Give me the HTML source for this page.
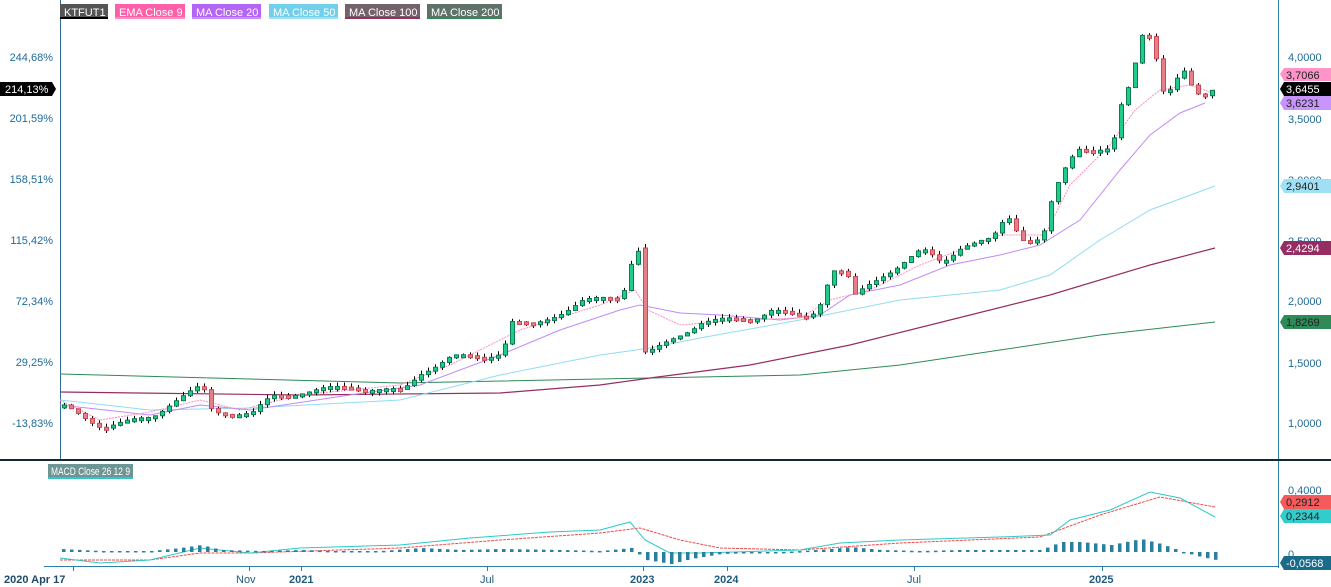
<!DOCTYPE html>
<html><head><meta charset="utf-8"><style>
html,body{margin:0;padding:0;background:#fff;width:1331px;height:587px;overflow:hidden;font-family:"Liberation Sans",sans-serif}
svg{display:block}
text{font-family:"Liberation Sans",sans-serif;font-size:11px}
</style></head><body>
<svg id="s" width="1331" height="587" xmlns="http://www.w3.org/2000/svg">
<rect width="1331" height="587" fill="#fff"/>
<line x1="60.5" y1="0" x2="60.5" y2="459" stroke="#2f6f95" stroke-width="1"/>
<line x1="1278.5" y1="0" x2="1278.5" y2="568" stroke="#2f7fa5" stroke-width="1"/>
<line x1="0" y1="460" x2="1331" y2="460" stroke="#0d2a3a" stroke-width="2"/>
<line x1="44" y1="566.5" x2="1279" y2="566.5" stroke="#2f7fa5" stroke-width="1"/>
<g id="lines"></g>
<g id="candles"></g>
<g id="macd"></g>
<g>
<rect x="60" y="4" width="48" height="14" fill="#555"/><rect x="60" y="17" width="48" height="2" fill="#000"/><text x="64" y="16" fill="#fff" font-size="12">KTFUT1</text>
<rect x="115" y="4" width="70" height="14" fill="#ff5fa8"/><rect x="115" y="17" width="70" height="2" fill="#ff90c4"/><text x="119" y="16" fill="#fff" font-size="12">EMA Close 9</text>
<rect x="192" y="4" width="69" height="14" fill="#b565f5"/><rect x="192" y="17" width="69" height="2" fill="#c98ff8"/><text x="196" y="16" fill="#fff" font-size="12">MA Close 20</text>
<rect x="269" y="4" width="69" height="14" fill="#72cfec"/><rect x="269" y="17" width="69" height="2" fill="#9fe0f4"/><text x="273" y="16" fill="#fff" font-size="12">MA Close 50</text>
<rect x="345" y="4" width="75" height="14" fill="#73616b"/><rect x="345" y="17" width="75" height="2" fill="#9c2d5f"/><text x="349" y="16" fill="#fff" font-size="12">MA Close 100</text>
<rect x="427" y="4" width="75" height="14" fill="#5e7268"/><rect x="427" y="17" width="75" height="2" fill="#2e8b57"/><text x="431" y="16" fill="#fff" font-size="12">MA Close 200</text>
<rect x="48" y="464" width="85" height="13" fill="#6e9595"/><rect x="48" y="477" width="85" height="2" fill="#2ec8c8"/><text x="51" y="475" fill="#fff" font-size="12" textLength="79" lengthAdjust="spacingAndGlyphs">MACD Close 26 12 9</text>
</g>
<g fill="#1f6a9a" text-anchor="end">
<text x="53" y="61">244,68%</text><text x="53" y="122">201,59%</text><text x="53" y="183">158,51%</text>
<text x="53" y="244">115,42%</text><text x="53" y="305">72,34%</text><text x="53" y="366">29,25%</text><text x="53" y="427">-13,83%</text>
</g>
<path d="M0,82 H52 L56,89 L52,96 H0 Z" fill="#000"/><text x="5" y="93" fill="#fff">214,13%</text>
<g fill="#1f6a9a">
<text x="1288" y="61">4,0000</text><text x="1288" y="123">3,5000</text><text x="1288" y="184">3,0000</text>
<text x="1288" y="245">2,5000</text><text x="1288" y="305">2,0000</text><text x="1288" y="367">1,5000</text><text x="1288" y="427">1,0000</text>
<text x="1288" y="494">0,4000</text><text x="1288" y="558">0</text>
</g>
<g>
<path d="M1280,74 L1284,68 H1331 V81 H1284 Z" fill="#ff94c8"/><text x="1286" y="79" fill="#222">3,7066</text>
<path d="M1280,89 L1284,82 H1331 V96 H1284 Z" fill="#000"/><text x="1286" y="93" fill="#fff">3,6455</text>
<path d="M1280,103 L1284,96 H1331 V110 H1284 Z" fill="#c795fb"/><text x="1286" y="107" fill="#222">3,6231</text>
<path d="M1280,186 L1284,179 H1331 V193 H1284 Z" fill="#9fe0f4"/><text x="1286" y="190" fill="#222">2,9401</text>
<path d="M1280,248 L1284,241 H1331 V255 H1284 Z" fill="#962d62"/><text x="1286" y="252" fill="#fff">2,4294</text>
<path d="M1280,322 L1284,315 H1331 V329 H1284 Z" fill="#2e8b57"/><text x="1286" y="326" fill="#222">1,8269</text>
<path d="M1280,502 L1284,495 H1331 V509 H1284 Z" fill="#f65a5a"/><text x="1286" y="506" fill="#222">0,2912</text>
<path d="M1280,516 L1284,509 H1331 V523 H1284 Z" fill="#33cccc"/><text x="1286" y="520" fill="#222">0,2344</text>
<path d="M1280,563 L1284,556 H1331 V570 H1284 Z" fill="#1a6a8a"/><text x="1286" y="567" fill="#fff">-0,0568</text>
</g>
<g stroke="#2f7fa5"><line x1="73.5" y1="567" x2="73.5" y2="571"/><line x1="249.5" y1="567" x2="249.5" y2="571"/><line x1="301.5" y1="567" x2="301.5" y2="571"/><line x1="487.5" y1="567" x2="487.5" y2="571"/><line x1="643.5" y1="567" x2="643.5" y2="571"/><line x1="727.5" y1="567" x2="727.5" y2="571"/><line x1="914.5" y1="567" x2="914.5" y2="571"/><line x1="1102.5" y1="567" x2="1102.5" y2="571"/></g>
<g fill="#1f5a80" font-weight="bold">
<text x="4" y="583" fill="#1d4a6a">2020 Apr 17</text>
<text x="236" y="583" font-weight="normal">Nov</text><text x="289" y="583">2021</text>
<text x="480" y="583" font-weight="normal">Jul</text><text x="630" y="583">2023</text>
<text x="714" y="583">2024</text><text x="907" y="583" font-weight="normal">Jul</text><text x="1089" y="583">2025</text>
</g>
</svg>
<script>
(function(){
var NS="http://www.w3.org/2000/svg";
function interp(pts,x){for(var i=0;i<pts.length-1;i++){if(x>=pts[i][0]&&x<=pts[i+1][0]){var t=(x-pts[i][0])/(pts[i+1][0]-pts[i][0]);return pts[i][1]+t*(pts[i+1][1]-pts[i][1]);}}return pts[pts.length-1][1];}
function el(n,a,p){var e=document.createElementNS(NS,n);for(var k in a){e.setAttribute(k,String(a[k]));}p.appendChild(e);return e;}
function pl(pts,c,w,d,p){var a={points:pts.map(function(q){return q[0]+","+q[1];}).join(" "),fill:"none",stroke:c,"stroke-width":w};if(d){a["stroke-dasharray"]=d;}el("polyline",a,p);}
var Lg=document.getElementById("lines");
pl([[60,374],[400,383],[650,378],[800,375],[900,365],[1000,350],[1100,335],[1215,322]],"#2e8b57",1,null,Lg);
pl([[60,392],[300,395],[500,393],[600,385],[650,378],[750,365],[850,345],[950,320],[1050,295],[1150,265],[1215,248]],"#962d62",1.2,null,Lg);
pl([[60,400],[150,410],[250,408],[400,400],[500,375],[600,355],[650,348],[700,338],[800,320],[900,300],[1000,290],[1050,275],[1100,240],[1150,210],[1215,186]],"#8fdcf2",1,null,Lg);
pl([[60,405],[150,415],[200,405],[250,410],[350,395],[420,385],[500,355],[560,330],[620,310],[640,305],[680,313],[720,315],[780,320],[820,315],[850,295],[900,285],[950,265],[1000,255],[1040,245],[1080,220],[1120,170],[1150,135],[1180,113],[1205,103]],"#c08af8",1,null,Lg);
pl([[60,400],[100,420],[150,412],[200,400],[240,410],[300,395],[400,385],[450,365],[520,330],[600,305],[635,290],[648,310],[680,325],[740,320],[800,318],[830,300],[870,290],[920,265],[1000,235],[1045,235],[1070,185],[1110,145],[1135,110],[1160,90],[1190,85],[1210,92],[1215,90]],"#ff8cc0",1,"2,1",Lg);
var C=[[60,405],[100,425],[130,420],[150,415],[170,400],[200,385],[210,410],[250,412],[270,395],[300,390],[350,385],[400,390],[420,370],[450,355],[480,356],[500,350],[510,320],[530,325],[560,310],[580,300],[620,295],[628,262],[637,250],[645,352],[660,345],[700,320],[750,318],[770,308],[800,318],[815,310],[830,268],[845,272],[850,298],[880,275],[920,250],[940,262],[960,245],[990,240],[1005,215],[1020,238],[1040,240],[1050,200],[1060,175],[1075,148],[1110,150],[1118,110],[1128,85],[1140,35],[1150,35],[1160,90],[1170,90],[1180,70],[1190,90],[1200,100],[1208,90],[1215,88]];
var G=document.getElementById("candles");var prev=405;var st=7;
for(var x=62;x<=1215;x+=st){var c=interp(C,x);var nz=Math.sin(x*1.7)*4+Math.cos(x*0.9)*3;var cl=c+((x>630&&x<650)?0:nz*0.6);var op=prev;if(x>=640&&x<647){op=248;cl=352;}
var tp=Math.min(op,cl),bt=Math.max(op,cl);if(bt-tp<3){bt=tp+3;}
var up=cl<op;var hi=tp-Math.abs(Math.sin(x*3.1))*4,lo=bt+Math.abs(Math.cos(x*2.3))*3;
el("line",{x1:x+2.5,y1:hi,x2:x+2.5,y2:lo,stroke:"#000","stroke-width":1},G);
el("rect",{x:x+0.5,y:tp,width:4,height:bt-tp,fill:up?"#1fcc8a":"#e58088",stroke:up?"#0d7a50":"#c94a55","stroke-width":1},G);
prev=cl;}
var M=document.getElementById("macd");
pl([[60,560],[150,560],[200,553],[250,553],[400,548],[500,540],[600,533],[640,528],[680,540],[720,548],[800,550],[900,543],[1040,537],[1100,515],[1160,497],[1215,507]],"#f24a4a",1,"3,1",M);
pl([[60,558],[100,563],[150,560],[200,548],[250,553],[300,548],[400,545],[470,538],[550,532],[600,530],[630,522],[645,540],[670,553],[700,553],[800,550],[840,543],[900,540],[1000,537],[1050,535],[1070,520],[1110,510],[1150,492],[1180,498],[1215,517]],"#2ec8c8",1,null,M);
var H=[[60,3],[100,1],[150,1],[180,4],[200,7],[220,2],[260,1],[300,2],[330,1],[380,1],[420,4],[460,2],[500,3],[560,2],[600,1],[630,4],[645,-8],[670,-12],[690,-7],[720,-2],[760,-1],[800,1],[830,3],[850,5],[880,2],[920,1],[960,2],[1000,2],[1040,2],[1060,10],[1080,10],[1110,7],[1140,13],[1160,8],[1185,-1],[1200,-5],[1215,-8]];
for(var xx=62;xx<=1215;xx+=8){var h=interp(H,xx);var y0=552;el("rect",{x:xx,y:h>0?y0-h:y0,width:3.5,height:Math.max(1.5,Math.abs(h)),fill:"#2a7f9e"},M);}
})();
</script>
</body></html>
